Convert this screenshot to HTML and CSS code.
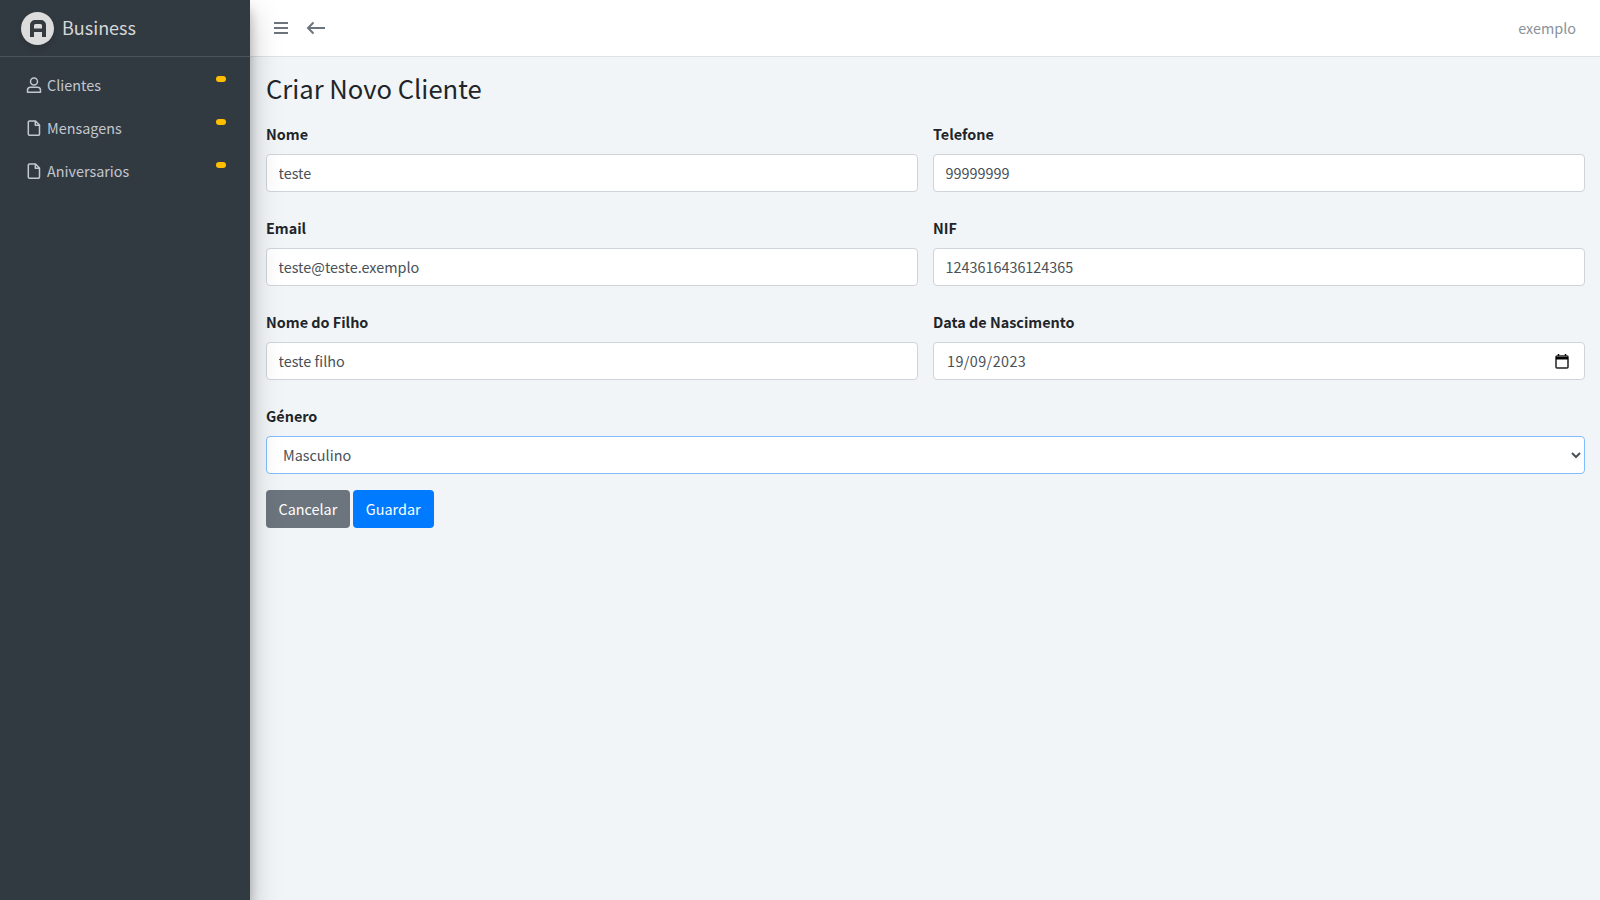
FILE: index.html
```html
<!DOCTYPE html>
<html lang="pt">
<head>
  <meta charset="UTF-8">
  <meta name="viewport" content="width=device-width, initial-scale=1.0">
  <title>Criar Novo Cliente</title>
  <link rel="stylesheet" href="styles.css">
</head>
<body>
  <aside class="sidebar">
    <div class="brand">
      <span class="brand-logo">
        <svg width="20" height="18" viewBox="0 0 20 18"><path d="M2 18V6a5 5 0 0 1 5-5h6a5 5 0 0 1 5 5v12h-4v-5H6v5zM6 9.500h8V6.500a1.500 1.500 0 0 0-1.500-1.500h-5A1.500 1.500 0 0 0 6 6.500z" fill="#343a40" fill-rule="evenodd"/></svg>
      </span>
      <span class="brand-text">Business</span>
    </div>
    <nav class="menu">
      <a class="menu-item" href="#">
        <svg class="menu-icon" width="16" height="16" viewBox="0 0 16 16" fill="none" stroke="currentColor" stroke-width="1.500"><circle cx="8" cy="4.500" r="3.500"/><path d="M1.500 15.200v-2a3 3 0 0 1 3-3h7a3 3 0 0 1 3 3v2z" stroke-linejoin="round"/></svg>
        <span>Clientes</span>
        <i class="badge"></i>
      </a>
      <a class="menu-item" href="#">
        <svg class="menu-icon" width="16" height="16" viewBox="0 0 16 16" fill="none" stroke="currentColor" stroke-width="1.500"><path d="M3.500 1h6l4 4v9a1.200 1.200 0 0 1-1.200 1.200H3.500A1.200 1.200 0 0 1 2.300 14V2.200A1.200 1.200 0 0 1 3.500 1zM9.300 1v4.200h4.200" stroke-linejoin="round"/></svg>
        <span>Mensagens</span>
        <i class="badge"></i>
      </a>
      <a class="menu-item" href="#">
        <svg class="menu-icon" width="16" height="16" viewBox="0 0 16 16" fill="none" stroke="currentColor" stroke-width="1.500"><path d="M3.500 1h6l4 4v9a1.200 1.200 0 0 1-1.200 1.200H3.500A1.200 1.200 0 0 1 2.300 14V2.200A1.200 1.200 0 0 1 3.500 1zM9.300 1v4.200h4.200" stroke-linejoin="round"/></svg>
        <span>Aniversarios</span>
        <i class="badge"></i>
      </a>
    </nav>
  </aside>

  <div class="main">
    <header class="topbar">
      <svg class="top-icon" width="16" height="14" viewBox="0 0 16 14" fill="none" stroke="#6c757d" stroke-width="2"><path d="M1 2h14M1 7h14M1 12h14"/></svg>
      <svg class="top-icon" width="20" height="14" viewBox="0 0 20 14" fill="none" stroke="#6c757d" stroke-width="2"><path d="M19 7H2M7.500 1.500 2 7l5.500 5.500"/></svg>
      <span class="user">exemplo</span>
    </header>

    <main class="content">
      <h1>Criar Novo Cliente</h1>
      <form>
        <div class="form-row">
          <div class="form-group">
            <label for="nome">Nome</label>
            <input id="nome" class="form-control" type="text" value="teste">
          </div>
          <div class="form-group">
            <label for="telefone">Telefone</label>
            <input id="telefone" class="form-control" type="text" value="99999999">
          </div>
          <div class="form-group">
            <label for="email">Email</label>
            <input id="email" class="form-control" type="text" value="teste@teste.exemplo">
          </div>
          <div class="form-group">
            <label for="nif">NIF</label>
            <input id="nif" class="form-control" type="text" value="1243616436124365">
          </div>
          <div class="form-group">
            <label for="filho">Nome do Filho</label>
            <input id="filho" class="form-control" type="text" value="teste filho">
          </div>
          <div class="form-group">
            <label>Data de Nascimento</label>
            <div class="form-control date-field">
              <span class="date-value">19/09/2023</span>
              <svg width="14" height="15" viewBox="0 0 14 15" fill="none"><path d="M3.500 0v2M10.500 0v2" stroke="#000" stroke-width="1.500"/><rect x="1" y="2" width="12" height="12" rx="1" stroke="#222" stroke-width="1.500"/><path d="M1 3h12v2.500H1z" fill="#000"/></svg>
            </div>
          </div>
        </div>
        <div class="form-group form-group-last">
          <label for="genero">Género</label>
          <select id="genero" class="form-control form-select">
            <option>Masculino</option>
            <option>Feminino</option>
          </select>
        </div>
        <div class="actions">
          <button type="button" class="btn btn-grey">Cancelar</button>
          <button type="submit" class="btn btn-blue">Guardar</button>
        </div>
      </form>
    </main>
  </div>
</body>
</html>
```
FILE: styles.css
```css
* {
  margin: 0;
  padding: 0;
  box-sizing: border-box;
}
body {
  display: flex;
  height: 900px;
  overflow: hidden;
  font-family: "Noto Sans CJK JP", "Noto Sans", sans-serif;
  font-size: 14.4px;
  line-height: 24px;
  color: #212529;
  background: #f2f5f8;
}
.sidebar {
  width: 250px;
  flex-shrink: 0;
  background: #323a41;
  box-shadow: 0 14px 28px rgba(0, 0, 0, 0.25), 0 10px 10px rgba(0, 0, 0, 0.22);
  z-index: 2;
}
.brand {
  display: flex;
  align-items: center;
  height: 57px;
  padding-left: 21px;
  border-bottom: 1px solid #4b545c;
}
.brand-logo {
  display: flex;
  align-items: center;
  justify-content: center;
  width: 33px;
  height: 33px;
  border-radius: 50%;
  background: #dcdcdc;
  box-shadow: 0 3px 6px rgba(0, 0, 0, 0.16);
}
.brand-text {
  margin-left: 8px;
  margin-bottom: 2px;
  font-size: 18px;
  color: #d6d8d9;
}
.menu {
  padding-top: 6px;
}
.menu-item {
  position: relative;
  display: flex;
  align-items: center;
  height: 43px;
  padding-left: 26px;
  color: #c2c7d0;
  text-decoration: none;
}
.menu-icon {
  margin-right: 5px;
}
.badge {
  position: absolute;
  top: 13px;
  right: 24px;
  width: 10px;
  height: 6px;
  border-radius: 3px;
  background: #ffbf00;
}
.main {
  flex: 1;
  min-width: 0;
}
.topbar {
  display: flex;
  align-items: center;
  height: 57px;
  padding: 0 24px 0 23px;
  background: #fff;
  border-bottom: 1px solid #dee2e6;
}
.top-icon {
  margin-right: 17px;
}
.user {
  margin-left: auto;
  color: #8a9299;
}
.content {
  padding: 12px 15px 0 16px;
}
h1 {
  font-size: 25.6px;
  font-weight: 400;
  line-height: 38px;
  margin-bottom: 15px;
}
.form-row {
  display: grid;
  grid-template-columns: 1fr 1fr;
  column-gap: 15px;
}
.form-group {
  margin-bottom: 24px;
}
.form-group-last {
  margin-bottom: 16px;
}
label {
  display: block;
  font-weight: 700;
  margin-bottom: 8px;
}
.form-control {
  display: block;
  width: 100%;
  height: 38px;
  padding: 5px 12px 7px 11.500px;
  font: inherit;
  color: #495057;
  background: #fff;
  border: 1px solid #ced4da;
  border-radius: 4px;
}
.date-field {
  display: flex;
  align-items: center;
  justify-content: space-between;
  padding: 0 15px 0 13px;
}
.date-value {
  letter-spacing: 0.400px;
}
.form-select {
  padding-left: 12px;
  border-color: #80bdff;
}
.actions {
  display: flex;
  gap: 3px;
}
.btn {
  height: 38px;
  padding: 0 11.500px;
  font: inherit;
  color: #fff;
  border: 1px solid transparent;
  border-radius: 4px;
  cursor: pointer;
}
.btn-grey {
  background: #6c757d;
}
.btn-blue {
  padding: 0 12px;
  background: #007bff;
}
```
